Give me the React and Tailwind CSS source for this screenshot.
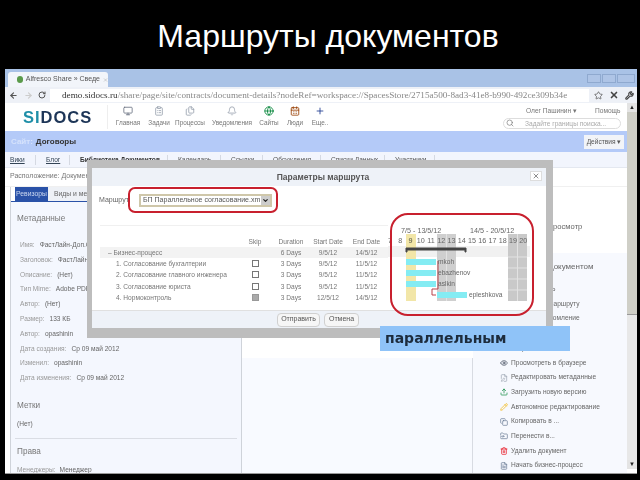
import React from 'react';
import { ArrowLeft, ArrowRight, RotateCw, Star, Wrench, Search, ChevronDown, X, Eye, FileEdit, Upload, Pencil, Copy, FolderInput, Trash2, FileText, Monitor, ClipboardList, Files, Bell, Globe, CalendarDays, Plus } from 'lucide-react';

const menu = [
  { label: 'Главная', Icon: Monitor, color: 'text-gray-500', w: 'w-[36px]' },
  { label: 'Задачи', Icon: ClipboardList, color: 'text-gray-400', w: 'w-[26px]' },
  { label: 'Процессы', Icon: Files, color: 'text-gray-400', w: 'w-[36px]' },
  { label: 'Уведомления', Icon: Bell, color: 'text-gray-400', w: 'w-[48px]' },
  { label: 'Сайты', Icon: Globe, color: 'text-green-700', w: 'w-[26px]' },
  { label: 'Люди', Icon: CalendarDays, color: 'text-amber-800', w: 'w-[26px]' },
  { label: 'Еще..', Icon: Plus, color: 'text-blue-900', w: 'w-[24px]' },
];

const navTabs = [
  ['Вики', 'w-[26px] underline text-[#345]'],
  ['Блог', 'w-[24px] underline text-[#345]'],
  ['Библиотека Документов', 'w-[88px] font-bold text-[#333]'],
  ['Календарь', 'w-[43px] text-[#555]'],
  ['Ссылки', 'w-[32px] text-[#555]'],
  ['Обсуждения', 'w-[48px] text-[#555]'],
  ['Списки Данных', 'w-[54px] text-[#555]'],
  ['Участники', 'w-[40px] text-[#555]'],
];

const meta = [
  ['Имя:', 'ФастЛайн-Доп.Соглашение'],
  ['Заголовок:', 'ФастЛайн-Доп'],
  ['Описание:', '(Нет)'],
  ['Тип Mime:', 'Adobe PDF Document'],
  ['Автор:', '(Нет)'],
  ['Размер:', '133 КБ'],
  ['Автор:', 'opashinin'],
  ['Дата создания:', 'Ср 09 май 2012'],
  ['Изменил:', 'opashinin'],
  ['Дата изменения:', 'Ср 09 май 2012'],
];

const actions = [
  ['Открыть', Eye, 'text-gray-500'],
  ['Просмотреть в браузере', Eye, 'text-gray-700'],
  ['Редактировать метаданные', FileEdit, 'text-gray-400'],
  ['Загрузить новую версию', Upload, 'text-green-700'],
  ['Автономное редактирование', Pencil, 'text-yellow-500'],
  ['Копировать в ...', Copy, 'text-slate-500'],
  ['Перенести в...', FolderInput, 'text-slate-500'],
  ['Удалить документ', Trash2, 'text-red-600'],
  ['Начать бизнес-процесс', FileText, 'text-slate-500'],
];

const steps = [
  { name: '– Бизнес-процесс', dur: '6 Days', start: '9/5/12', end: '14/5/12', head: true },
  { name: '1. Согласование бухгалтерии', dur: '3 Days', start: '9/5/12', end: '11/5/12' },
  { name: '2. Согласование главного инженера', dur: '3 Days', start: '9/5/12', end: '11/5/12' },
  { name: '3. Согласование юриста', dur: '3 Days', start: '9/5/12', end: '11/5/12' },
  { name: '4. Нормоконтроль', dur: '3 Days', start: '12/5/12', end: '14/5/12', off: true },
];

const days = [7, 8, 9, 10, 11, 12, 13, 14, 15, 16, 17, 18, 19, 20];

function Gantt() {
  const dayX = (i) => 2 + i * 10.25;
  return (
    <svg width="142" height="92" viewBox="0 0 142 92" className="block" fontFamily="'Liberation Sans', sans-serif" fontSize="7.2" fill="#666">
      <rect x="0" y="32" width="142" height="11" fill="#f1f1f1" />
      <rect x="18" y="20" width="10" height="67" fill="#f2e6a8" />
      <rect x="49" y="20" width="19" height="67" fill="#cfcfcf" />
      <rect x="120" y="20" width="19" height="67" fill="#c9c9c9" />
      <path d="M129.5 20V87M120 43H139M120 54H139M120 65H139M120 76H139M58.5 20V87" stroke="#e2e2e2" strokeWidth="1" />
      <text x="13" y="19">7/5 - 13/5/12</text>
      <text x="82" y="19">14/5 - 20/5/12</text>
      {days.map((d, i) => (
        <text key={d} x={dayX(i)} y="29" textAnchor="middle" fill={d === 9 ? '#554' : '#666'}>{d}</text>
      ))}
      <path d="M18 34H78V38H77V36H19V38H18Z" fill="#444" stroke="#444" />
      <rect x="18" y="45" width="30" height="6" fill="#84ecf3" />
      <rect x="18" y="56" width="30" height="6" fill="#84ecf3" />
      <rect x="18" y="67" width="30" height="6" fill="#84ecf3" />
      <rect x="49" y="78" width="30" height="6" fill="#84ecf3" />
      <path d="M50 47V75H44V81H48" stroke="#b8434a" strokeWidth="1" fill="none" />
      <text x="50" y="50" fontSize="6.6">mkoh</text>
      <text x="50" y="61" fontSize="6.6">ebazhenov</text>
      <text x="50" y="72" fontSize="6.6">aslkin</text>
      <text x="81" y="83" fontSize="6.6">epleshkova</text>
    </svg>
  );
}

function RouteDialog() {
  return (
    <div className="absolute left-[82px] top-[91px] w-[466px] h-[178px] bg-[#bdbdbd] pt-[8px] pl-[5px] pr-[7px] pb-[10px]">
      <div className="relative flex flex-col h-full bg-white">
        <div className="relative h-[18px] bg-[#eef2f8] flex items-center justify-center text-[8.5px] font-bold text-[#555]">
          <span className="ml-[8px]">Параметры маршрута</span>
          <span className="absolute right-[4px] top-[3px] w-[12px] h-[10px] flex items-center justify-center bg-white border border-[#ddd]">
            <X size={8} className="text-[#555]" />
          </span>
        </div>
        <div className="flex items-center h-[28px] pl-[7px] text-[7px] text-[#666]">
          <span className="w-[40px]">Маршрут</span>
          <div className="flex items-center w-[133px] h-[13px] border-2 border-[#cfc7aa] bg-white pl-[2px] text-[7px] text-[#555] whitespace-nowrap">
            <span className="flex-1">БП Параллельное согласование.xm</span>
            <span className="flex items-center justify-center w-[9px] h-full bg-[#ccc]">
              <ChevronDown size={7} strokeWidth={4} className="text-[#222]" />
            </span>
          </div>
        </div>
        <div className="flex mt-[11px] pl-[8px] text-[6.6px] text-[#777]">
          <div className="w-[288px] pt-[10px] border-t border-[#f0f0f0]">
            <div className="grid grid-cols-[139px_32px_40px_34px_43px] h-[11px] text-center leading-[11px] whitespace-nowrap">
              <span />
              <span>Skip</span>
              <span>Duration</span>
              <span>Start Date</span>
              <span>End Date</span>
            </div>
            {steps.map((s) => (
              <div key={s.name} className={`grid grid-cols-[139px_32px_40px_34px_43px] h-[11.2px] text-center leading-[11px] whitespace-nowrap ${s.head ? 'bg-[#f3f3f3]' : ''}`}>
                <span className={`text-left ${s.head ? 'pl-[8px]' : 'pl-[16px]'}`}>{s.name}</span>
                <span className="flex justify-center items-center">
                  {!s.head && <span className={`block w-[7px] h-[7px] border ${s.off ? 'bg-[#aaa] border-[#999]' : 'bg-white border-[#777]'}`} />}
                </span>
                <span>{s.dur}</span>
                <span>{s.start}</span>
                <span>{s.end}</span>
              </div>
            ))}
          </div>
          <div className="-mt-[11px]">
            <Gantt />
          </div>
        </div>
        <div className="mt-auto h-[18px] bg-[#eef2f8] border-t border-[#e0e0e0] flex items-center gap-[4px] pl-[185px] text-[7px] text-[#555]">
          <span className="flex items-center justify-center w-[43px] h-[14px] bg-[#f6f6f6] border border-[#d0d0d0] rounded-sm">Отправить</span>
          <span className="flex items-center justify-center w-[35px] h-[14px] bg-[#f6f6f6] border border-[#d0d0d0] rounded-sm">Отмена</span>
        </div>
        <div className="absolute left-[36px] top-[19px] w-[150px] h-[26px] border-2 border-[#c8202e] rounded-[7px]" />
        <div className="absolute left-[298px] top-[45px] w-[144px] h-[103px] border-2 border-[#c8202e] rounded-[18px]" />
      </div>
    </div>
  );
}

export default function App() {
  return (
    <div className="w-[640px] h-[480px] overflow-hidden bg-black font-['Liberation_Sans',sans-serif]">
      <h1 className="h-[69px] pt-[18px] pl-[16px] text-center text-white text-[32px] leading-[36px]">Маршруты документов</h1>
      <div className="relative w-[632px] h-[405px] ml-[5px] flex flex-col overflow-hidden blur-[0.45px] bg-white">
        {/* browser chrome */}
        <div className="h-[18px] bg-[#a9c2e6] flex items-end pl-[3px] shrink-0">
          <div className="flex items-center gap-[3px] w-[100px] h-[15px] bg-[#f2f5fa] rounded-t-[3px] pl-[9px] text-[7px] text-[#555] whitespace-nowrap">
            <span className="block w-[7px] h-[7px] rounded-full bg-[#5a9a4a]" />
            Alfresco Share » Сведе
            <X size={6} className="text-[#999]" />
          </div>
          <div className="ml-auto flex gap-[1px] mr-[2px] mb-[4px]">
            <span className="block w-[14px] h-[9px] border border-[#8fa9cf] bg-[#aec4e6]" />
            <span className="block w-[14px] h-[9px] border border-[#8fa9cf] bg-[#aec4e6]" />
            <span className="block w-[18px] h-[9px] border border-[#8fa9cf] bg-[#aec4e6]" />
          </div>
        </div>
        <div className="h-[16px] bg-[#eef1f7] flex items-center pl-[4px] pr-[3px] shrink-0">
          <ArrowLeft size={9} strokeWidth={3} className="text-[#555]" />
          <ArrowRight size={9} strokeWidth={3} className="text-[#ccc] ml-[6px]" />
          <RotateCw size={8} strokeWidth={3} className="text-[#555] ml-[5px]" />
          <div className="flex-1 ml-[4px] mr-[5px] text-[9.2px] font-['Liberation_Serif',serif] text-[#888] whitespace-nowrap overflow-hidden bg-white h-[13px] leading-[13px] pl-[12px] min-w-0">
            <span className="text-[#333]">demo.sidocs.ru</span>/share/page/site/contracts/document-details?nodeRef=workspace://SpacesStore/2715a500-8ad3-41e8-b990-492ce309b34e
          </div>
          <Star size={9} className="text-[#555]" />
          <X size={10} strokeWidth={4} className="text-[#444] ml-[6px]" />
          <Wrench size={9} strokeWidth={3} className="text-[#444] ml-[6px]" />
        </div>
        <div className="flex-1 flex min-h-0">
          <div className="flex-1 flex flex-col min-w-0">
            {/* app header */}
            <div className="h-[28px] bg-white flex items-center shrink-0">
              <div className="w-[103px] pl-[18px] text-[16.5px] leading-none font-bold tracking-[1px] text-[#1d3557] border-r border-[#eee] h-[24px] flex items-center">
                <span className="text-[#1f8fa8]">SI</span>DOCS
              </div>
              <div className="flex text-[6.4px] text-[#777] ml-[2px]">
                {menu.map(({ label, Icon, color, w }) => (
                  <div key={label} className={`flex flex-col items-center whitespace-nowrap ${w}`}>
                    <Icon size={10} className={color} />
                    <span className="mt-[2px]">{label}</span>
                  </div>
                ))}
              </div>
              <div className="ml-auto w-[118px] mr-[6px] text-[6.6px] text-[#777] mt-[1px]">
                <div className="flex pl-[23px] gap-[18px] whitespace-nowrap">
                  <span>Олег Пашинин ▾</span>
                  <span>Помощь</span>
                </div>
                <div className="flex items-center h-[11px] mt-[2px] border border-[#ddd] rounded-full pl-[2px] text-[#aaa] whitespace-nowrap">
                  <Search size={8} className="text-[#777] mr-[11px]" />
                  Задайте границы поиска...
                </div>
              </div>
            </div>
            <div className="h-[21px] bg-[#b4caf8] flex items-center pl-[6px] pr-[3px] text-[8px] font-bold shrink-0">
              <span className="text-[#d5e2fc] mr-[3px]">Сайт:</span>
              <span className="text-[#333]">Договоры</span>
              <span className="ml-auto flex items-center justify-center w-[40px] h-[14px] bg-[#f2f4f8] text-[6.6px] font-normal text-[#555] whitespace-nowrap">Действия ▾</span>
            </div>
            <div className="h-[16px] bg-[#f2f5fd] border-b border-[#e4e8f0] flex items-start pt-[3px] pl-[5px] text-[6.6px] shrink-0 whitespace-nowrap">
              {navTabs.map(([t, cls]) => (
                <span key={t} className={`${cls} mr-[10px] border-r border-[#d5d9e2]`}>{t}</span>
              ))}
            </div>
            <div className="h-[19px] bg-white text-[7px] text-[#777] pl-[5px] pt-[3px] shrink-0 border-b border-[#f0f0f0]">Расположение: Документы</div>
            {/* page body */}
            <div className="flex-1 flex min-h-0">
              <div className="w-[232px] ml-[5px] bg-[#f4f7fe] border-x border-[#cfd3da] flex flex-col shrink-0 overflow-hidden">
                <div className="flex h-[15px] pl-[4px] bg-white border-b border-[#2a52a8] text-[6.8px] shrink-0">
                  <span className="flex items-center justify-center w-[33px] bg-[#2a52a8] text-[#cdd9f0]">Ревизоры</span>
                  <span className="flex items-center pl-[6px] flex-1 bg-[#eef1f6] text-[#666]">Виды и метаданные</span>
                </div>
                <div className="pl-[6px] pt-[10px] text-[8.2px] leading-[14px] text-[#777]">Метаданные</div>
                <div className="pl-[9px] pt-[12px] text-[6.6px] leading-[14.8px] whitespace-nowrap">
                  {meta.map(([k, v], i) => (
                    <div key={i}>
                      <span className="text-[#999]">{k}</span>
                      <span className="text-[#666] ml-[5px]">{v}</span>
                    </div>
                  ))}
                </div>
                <div className="pl-[6px] pt-[13px] text-[8.2px] leading-[14px] text-[#777]">Метки</div>
                <div className="pl-[6px] pt-[5px] text-[6.6px] leading-[12px] text-[#666]">(Нет)</div>
                <div className="mx-[4px] mt-[8px] border-t border-[#dadde4]" />
                <div className="pl-[6px] pt-[6px] text-[8.2px] leading-[14px] text-[#777]">Права</div>
                <div className="pl-[6px] pt-[5px] text-[6.6px] leading-[12px] whitespace-nowrap">
                  <span className="text-[#999]">Менеджеры:</span>
                  <span className="text-[#666] ml-[4px]">Менеджер</span>
                </div>
              </div>
              <div className="w-[231px] bg-white shrink-0 flex flex-col">
                <div className="flex-1" />
                <div className="h-[115px] border-r border-[#d8dbe2] bg-[#f8faff]" />
              </div>
              <div className="flex-1 bg-[#f7f9fe] flex flex-col text-[6.6px] text-[#666] whitespace-nowrap min-w-0">
                <div className="h-[68px] bg-white pl-[76px] pt-[34px] text-[7.6px] leading-[12px]">просмотр</div>
                <div className="pl-[76px] pt-[7px] text-[8px] leading-[14px]">документом</div>
                <div className="pl-[76px] pt-[8px] leading-[14.6px]">
                  <div>ть</div>
                  <div>маршруту</div>
                  <div>домление</div>
                </div>
                <div className="mt-[15px] pl-[27px] leading-[14.7px]">
                  {actions.map(([label, Icon, color]) => (
                    <div key={label} className="flex items-center gap-[3px] h-[14.7px]">
                      <Icon size={8} className={color} />
                      {label}
                    </div>
                  ))}
                </div>
              </div>
            </div>
          </div>
          {/* scrollbar */}
          <div className="w-[10px] bg-[#e8e8e8] flex flex-col items-center shrink-0 mb-[4px]">
            <span className="h-[9px] w-full bg-[#e4e4e4] text-[6px] leading-[9px] text-center text-[#222]">▲</span>
            <span className="w-full h-[203px] bg-[#cfcfc7] border-b border-[#999]" />
            <span className="mt-auto h-[9px] w-full bg-[#e4e4e4] text-[6px] leading-[9px] text-center text-[#222]">▼</span>
          </div>
        </div>
        <div className="h-[1px] bg-[#999] shrink-0" />
        <RouteDialog />
        <div className="absolute left-[375px] top-[257px] w-[190px] h-[25px] bg-[#8fc3f8] pl-[5px] flex items-center font-['DejaVu_Sans',sans-serif] font-bold text-[14px] text-[#1d2c3d]">параллельным</div>
      </div>
    </div>
  );
}
